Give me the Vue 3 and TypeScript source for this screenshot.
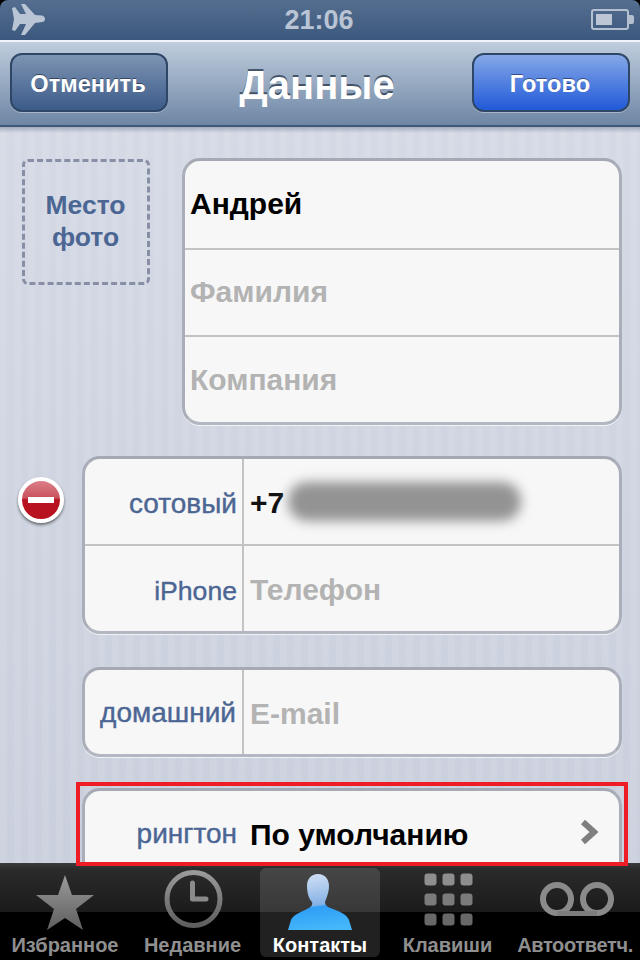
<script setup lang="ts">
const nameRows = [
  { text: 'Андрей', ph: false },
  { text: 'Фамилия', ph: true },
  { text: 'Компания', ph: true },
]
const phoneRows = [
  { label: 'сотовый', text: '+7', ph: false, latin: false },
  { label: 'iPhone', text: 'Телефон', ph: true, latin: true },
]
const tabs = [
  { label: 'Избранное', icon: 'star', active: false },
  { label: 'Недавние', icon: 'clock', active: false },
  { label: 'Контакты', icon: 'person', active: true },
  { label: 'Клавиши', icon: 'keys', active: false },
  { label: 'Автоответч.', icon: 'vm', active: false },
]
const rowFill = ['#8e8e8e', '#7b7b7b', '#686868']
const keyDots: { x: number; y: number; fill: string }[] = []
;[0, 20, 40].forEach((y, r) => {
  for (const x of [0, 18, 36]) keyDots.push({ x, y, fill: rowFill[r] })
})
</script>

<template>
  <div class="phone">
    <header class="status">
      <svg class="plane" width="34" height="32" viewBox="0 0 34 32">
        <path d="M0 4 L3 3 L8 10 L14 10 L9 0 L13 0 L23 11 L30 11.5 Q33 12.5 33 15 Q33 17.5 30 18 L23 19 L13 31 L9 31 L14 20 L8 20 L3 27 L0 26 L2 15 Z" fill="#b9c4d4" />
      </svg>
      <span class="time">21:06</span>
      <svg class="battery" width="44" height="22" viewBox="0 0 44 22">
        <rect x="1" y="1" width="36" height="19" rx="2" fill="none" stroke="#b4bfcf" stroke-width="2" />
        <rect x="5" y="5" width="16" height="11" fill="#bcc6d5" />
        <path d="M38 6h3a2 2 0 0 1 2 2v5a2 2 0 0 1-2 2h-3z" fill="#b4bfcf" />
      </svg>
    </header>
    <nav class="nav">
      <button class="bar-btn cancel">Отменить</button>
      <h1 class="title">Данные</h1>
      <button class="bar-btn done">Готово</button>
    </nav>
    <main class="content">
      <section class="top">
        <div class="photo">Место<br />фото</div>
        <div class="card name-card">
          <div v-for="r in nameRows" :key="r.text" class="row name-row" :class="{ ph: r.ph }">{{ r.text }}</div>
        </div>
      </section>

      <section class="phone-block">
        <div class="minus"><span></span></div>
        <div class="card">
          <div v-for="r in phoneRows" :key="r.label" class="row split">
            <div class="label" :class="{ latin: r.latin }">{{ r.label }}</div>
            <div class="value" :class="{ ph: r.ph }">
              {{ r.text }}
              <span v-if="!r.ph" class="blur"></span>
            </div>
          </div>
        </div>
      </section>

      <section class="card single">
        <div class="row split">
          <div class="label home">домашний</div>
          <div class="value ph">E-mail</div>
        </div>
      </section>

      <section class="card ring">
        <div class="ring-row">
          <div class="label ring-label">рингтон</div>
          <div class="ring-value">По умолчанию</div>
          <svg class="chev" width="18" height="26" viewBox="0 0 18 26">
            <path d="M3 3 L14 13 L3 23" fill="none" stroke="#7f7f7f" stroke-width="6" />
          </svg>
        </div>
      </section>
    </main>
    <div class="redbox"></div>
    <footer class="tabbar">
      <div v-for="t in tabs" :key="t.label" class="tab" :class="{ active: t.active }">
        <svg class="ticon" width="70" height="62" viewBox="0 0 70 62">
          <defs v-if="t.icon === 'star'">
            <linearGradient id="g" x1="0" y1="0" x2="0" y2="1">
              <stop offset="0" stop-color="#9a9a9a" />
              <stop offset="1" stop-color="#5e5e5e" />
            </linearGradient>
          </defs>
          <defs v-if="t.icon === 'person'">
            <linearGradient id="b" x1="0.38" y1="0" x2="0.52" y2="1">
              <stop offset="0" stop-color="#d0dff4" />
              <stop offset="0.55" stop-color="#85b2e6" />
              <stop offset="0.59" stop-color="#2f9ff5" />
              <stop offset="1" stop-color="#45b8fb" />
            </linearGradient>
          </defs>
          <path v-if="t.icon === 'star'" d="M35 7 L42 27 L64 27 L46 41 L53 62 L35 50 L17 62 L24 41 L6 27 L28 27 Z" fill="url(#g)" />
          <g v-else-if="t.icon === 'clock'">
            <circle cx="35.5" cy="31" r="26.5" fill="none" stroke="url(#g)" stroke-width="5" />
            <path d="M34.5 15 V31 H48" fill="none" stroke="#8a8a8a" stroke-width="5" stroke-linecap="round" stroke-linejoin="round" />
          </g>
          <path v-else-if="t.icon === 'person'" d="M33 6 C40 6 44 11 44 18 C44 25 41 31 40 34 C40 38 43 39 48 41 C56 44 62 47 64 52 L67 62 L3 62 L6 52 C8 47 16 44 22 41 C26 39 28 37 27 34 C24 31 22 25 22 18 C22 11 26 6 33 6 Z" fill="url(#b)" />
          <g v-else-if="t.icon === 'keys'">
            <rect v-for="(d, i) in keyDots" :key="i" :x="d.x + 11.5" :y="d.y + 5.5" width="12" height="12" rx="3" :fill="d.fill" />
          </g>
          <g v-else>
            <circle cx="17" cy="31" r="14" fill="none" stroke="#8a8a8a" stroke-width="6" />
            <circle cx="57" cy="31" r="14" fill="none" stroke="#8a8a8a" stroke-width="6" />
            <rect x="17" y="43" width="40" height="5" fill="#7c7c7c" />
          </g>
        </svg>
        <span class="tlabel">{{ t.label }}</span>
      </div>
    </footer>
  </div>
</template>

<style scoped>
* { box-sizing: border-box; }
.phone {
  width: 640px;
  height: 960px;
  overflow: hidden;
  position: relative;
  display: flex;
  flex-direction: column;
  font-family: "Liberation Sans", Arial, sans-serif;
  background: #000;
}
.status {
  height: 40px;
  flex: none;
  border-radius: 8px 8px 0 0;
  display: flex;
  align-items: center;
  justify-content: space-between;
  padding: 0 5px 0 12px;
  position: relative;
  background: linear-gradient(#556e90, #3c587e);
}
.time {
  position: absolute;
  left: 0;
  right: 2px;
  top: 1px;
  text-align: center;
  font-size: 27px;
  line-height: 38px;
  font-weight: 700;
  color: #b9c4d4;
}
.nav {
  height: 87px;
  flex: none;
  border-top: 2px solid #f0f3f7;
  border-bottom: 2px solid #3f5878;
  background: linear-gradient(#bfcddd, #6e86a5);
  display: flex;
  align-items: center;
  justify-content: space-between;
  padding: 0 10px 2px;
  position: relative;
}
.bar-btn {
  width: 158px;
  height: 59px;
  border-radius: 12px;
  border: 2px solid #2f4766;
  font: 700 23.6px "Liberation Sans", Arial, sans-serif;
  color: #fff;
  text-shadow: 0 -1px 0 rgba(0, 0, 0, 0.45);
  padding: 3px 2px 0 0;
  box-shadow: 0 1px 0 rgba(255, 255, 255, 0.35);
}
.cancel { background: linear-gradient(#7d94b3, #3c5b8a); }
.done { background: linear-gradient(#85a8e8, #2159d8); }
.title {
  margin: 6px 6px 0 0;
  font-size: 40px;
  font-weight: 700;
  color: #fff;
  text-shadow: 0 -2px 0 rgba(40, 55, 75, 0.75);
}
.content {
  flex: 1;
  min-height: 0;
  overflow: hidden;
  padding: 31px 18px 0 0;
  background:
    linear-gradient(rgba(70, 85, 110, 0.35), rgba(70, 85, 110, 0) 6px),
    repeating-linear-gradient(90deg, rgba(255, 255, 255, 0.08) 0 7px, rgba(255, 255, 255, 0) 7px 14px),
    linear-gradient(#d4d9e5, #c9cfdc);
}
.top {
  display: flex;
  align-items: flex-start;
  padding-left: 22px;
  gap: 33px;
}
.photo {
  width: 128px;
  height: 126px;
  margin-top: 1px;
  flex: none;
  border: 3px dashed #868fa5;
  border-radius: 6px;
  display: flex;
  align-items: center;
  justify-content: center;
  text-align: center;
  font-size: 26.5px;
  line-height: 32px;
  font-weight: 700;
  color: #4c6694;
  padding: 0 1px 3px 0;
}
.card {
  background: #f7f7f7;
  border: 3px solid #a9aeb9;
  border-top-color: #a4a9b4;
  border-bottom-color: #b2b7c1;
  border-radius: 18px;
  overflow: hidden;
  box-shadow: 0 1px 0 rgba(255, 255, 255, 0.7);
}
.name-card { flex: 1; height: 267px; margin-left: -1px; }
.row {
  height: 88px;
  border-bottom: 2px solid #c3c3c3;
}
.row:last-child { border-bottom: 0; }
.name-row {
  height: 87px;
  padding: 26px 0 0 5px;
  font-size: 30px;
  line-height: 32px;
  font-weight: 700;
  color: #000;
}
.name-row:first-child { height: 89px; padding-top: 27px; }
.name-row:last-child { padding-top: 27px; }
.ph { color: #b3b3b3 !important; }
.phone-block {
  position: relative;
  margin-top: 31px;
  margin-left: 82px;
}
.phone-block .card { height: 178px; }
.phone-block .row:first-child { height: 87px; }
.minus {
  position: absolute;
  left: -64px;
  top: 21px;
  width: 46px;
  height: 46px;
  border-radius: 50%;
  border: 4px solid #fff;
  background: linear-gradient(#dc7f88 0, #c9525e 44%, #b81120 50%, #b81120 100%);
  box-shadow: 0 2px 3px rgba(0, 0, 0, 0.5);
  display: flex;
  align-items: center;
  justify-content: center;
}
.minus span {
  width: 26px;
  height: 6px;
  background: #fff;
}
.split { display: flex; }
.label {
  width: 159px;
  flex: none;
  border-right: 2px solid #c3c3c3;
  text-align: right;
  font-size: 28px;
  font-weight: 400;
  color: #4c6694;
  padding: 30px 5px 0 0;
  -webkit-text-stroke: 0.4px #4c6694;
  line-height: 30px;
  white-space: nowrap;
}
.label.latin { font-size: 26.6px; padding-right: 5px; }
.label.home { padding-top: 28px; padding-right: 6px; }
.value {
  position: relative;
  flex: 1;
  font-size: 30px;
  font-weight: 700;
  color: #111;
  line-height: 32px;
  padding: 28px 0 0 6px;
}
.blur {
  position: absolute;
  left: 44px;
  top: 23px;
  width: 233px;
  height: 39px;
  border-radius: 19px;
  background: #939393;
  filter: blur(6px);
}
.single {
  margin: 33px 0 0 82px;
  height: 90px;
}
.ring {
  margin: 31px 0 0 82px;
  height: 100px;
}
.ring-row {
  height: 100%;
  display: flex;
  align-items: flex-start;
  padding-top: 28px;
}
.ring-label {
  width: 157px;
  border-right: 0;
  padding: 0 5px 0 0;
}
.ring-value {
  flex: 1;
  padding-left: 8px;
  font-size: 30px;
  font-weight: 700;
  color: #000;
  line-height: 32px;
}
.chev { margin: 0 21px 0 0; }
.redbox {
  position: absolute;
  left: 76px;
  top: 782px;
  width: 552px;
  height: 84px;
  border: 4px solid #ee1c25;
  z-index: 3;
}
.tabbar {
  height: 97px;
  flex: none;
  display: grid;
  grid-template-columns: 130px 125px 130px 125px 130px;
  padding: 5px 0 4px 0;
  background: linear-gradient(#3c3c3c 0, #2b2b2b 6%, #1b1b1b 50%, #000 50%, #000 100%);
}
.tab {
  display: flex;
  flex-direction: column;
  align-items: center;
  border-radius: 6px;
  color: #8f8f8f;
  white-space: nowrap;
}
.tab.active {
  background: rgba(255, 255, 255, 0.13);
  color: #fff;
  margin: 0 5px;
}
.ticon { flex: none; overflow: visible; }
.tlabel {
  font-size: 20px;
  font-weight: 700;
  line-height: 24px;
  margin-top: 3px;
}
.tab:last-child .tlabel { letter-spacing: -0.35px; }
</style>
